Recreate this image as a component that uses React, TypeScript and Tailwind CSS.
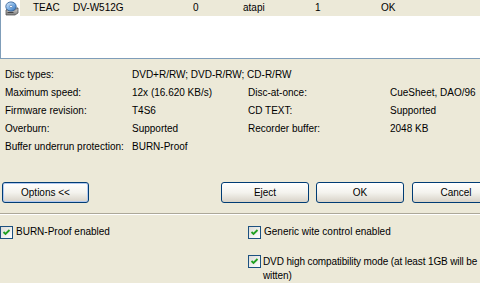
import React from "react";

function DriveIcon() {
  return (
    <svg width="15" height="15" viewBox="0 0 15 15">
      <defs>
        <linearGradient id="dk" x1="0" y1="0" x2="1" y2="1">
          <stop offset="0" stopColor="#e8f2fc" />
          <stop offset="0.5" stopColor="#7fb2e6" />
          <stop offset="1" stopColor="#2f6cb4" />
        </linearGradient>
        <linearGradient id="dr" x1="0" y1="0" x2="0" y2="1">
          <stop offset="0" stopColor="#d8d8d8" />
          <stop offset="1" stopColor="#7a7a7a" />
        </linearGradient>
      </defs>
      <path d="M2 9 L5 7 L14 7 L14 12 L11 14 L2 14 Z" fill="url(#dr)" stroke="#555" strokeWidth="0.8" />
      <path d="M2 9 L11 9 L14 7" fill="none" stroke="#555" strokeWidth="0.6" />
      <rect x="3.5" y="11" width="6" height="1" fill="#444" />
      <ellipse cx="7" cy="5.5" rx="5.2" ry="4.6" fill="url(#dk)" stroke="#2a5a96" strokeWidth="0.8" />
      <ellipse cx="7" cy="5.5" rx="1.4" ry="1.2" fill="#fff" stroke="#2a5a96" strokeWidth="0.5" />
    </svg>
  );
}

function Check() {
  return (
    <span className="relative inline-block w-[13px] h-[13px] shrink-0 border border-[#1c5180] bg-gradient-to-br from-[#dcdcd7] to-white">
      <svg width="11" height="11" viewBox="0 0 11 11" className="absolute left-0 top-0">
        <path d="M2.5 5 L4.5 7 L8.5 3" fill="none" stroke="#21a121" strokeWidth="1.8" />
      </svg>
    </span>
  );
}

function Btn({ label, w, focus }: { label: string; w: string; focus?: boolean }) {
  return (
    <div
      className={`${w} h-[21px] shrink-0 flex items-center justify-center rounded-[3px] border border-[#003c74] bg-gradient-to-b from-white via-[#f4f3ee] to-[#d8d3c8] ${
        focus ? "shadow-[inset_0_0_0_1px_#b2c8ef]" : ""
      }`}
    >
      {label}
    </div>
  );
}

export default function App() {
  return (
    <div
      className="w-[480px] h-[283px] overflow-hidden bg-[#ece9d8] text-black text-[10px] leading-[14px] flex flex-col"
      style={{ fontFamily: '"Liberation Sans", Arial, sans-serif' }}
    >
      {/* list */}
      <div className="h-[59px] shrink-0 bg-white border-l border-b border-[#7f9db9]">
        <div className="h-[16px] flex items-center">
          <div className="w-[19px] pl-[3px] flex items-center">
            <DriveIcon />
          </div>
          <div className="flex-1 h-[16px] bg-[#ece9d8] flex items-center pl-[13px] whitespace-nowrap">
            <span className="w-[40px]">TEAC</span>
            <span className="w-[120px]">DV-W512G</span>
            <span className="w-[50px]">0</span>
            <span className="w-[72px]">atapi</span>
            <span className="w-[66px]">1</span>
            <span>OK</span>
          </div>
        </div>
      </div>

      {/* info grid */}
      <div className="mt-[7px] pl-[5px] grid grid-cols-[127px_116px_142px_1fr] auto-rows-[18px] items-center whitespace-nowrap">
        <span>Disc types:</span>
        <span className="col-span-3">DVD+R/RW; DVD-R/RW; CD-R/RW</span>
        <span>Maximum speed:</span>
        <span>12x (16.620 KB/s)</span>
        <span>Disc-at-once:</span>
        <span>CueSheet, DAO/96</span>
        <span>Firmware revision:</span>
        <span>T4S6</span>
        <span>CD TEXT:</span>
        <span>Supported</span>
        <span>Overburn:</span>
        <span>Supported</span>
        <span>Recorder buffer:</span>
        <span>2048 KB</span>
        <span>Buffer underrun protection:</span>
        <span className="col-span-3">BURN-Proof</span>
      </div>

      {/* buttons */}
      <div className="mt-[26px] flex pl-[2px] whitespace-nowrap">
        <Btn label="Options <<" w="w-[87px]" focus />
        <div className="w-[132px] shrink-0" />
        <Btn label="Eject" w="w-[88px]" />
        <div className="w-[7px] shrink-0" />
        <Btn label="OK" w="w-[88px]" />
        <div className="w-[8px] shrink-0" />
        <Btn label="Cancel" w="w-[88px]" />
      </div>

      {/* separator */}
      <div className="mt-[10px] border-t border-[#aca899] border-b border-b-white" />

      {/* checkboxes */}
      <div className="mt-[10px] flex items-start whitespace-nowrap">
        <div className="w-[248px] shrink-0 flex items-center gap-[3px]">
          <Check />
          <span>BURN-Proof enabled</span>
        </div>
        <div className="flex flex-col gap-[16px]">
          <div className="flex items-center gap-[3px]">
            <Check />
            <span>Generic wite control enabled</span>
          </div>
          <div className="flex items-start gap-[2px]">
            <Check />
            <span className="tracking-[-0.12px]">
              DVD high compatibility mode (at least 1GB will be
              <br />
              witten)
            </span>
          </div>
        </div>
      </div>
    </div>
  );
}
